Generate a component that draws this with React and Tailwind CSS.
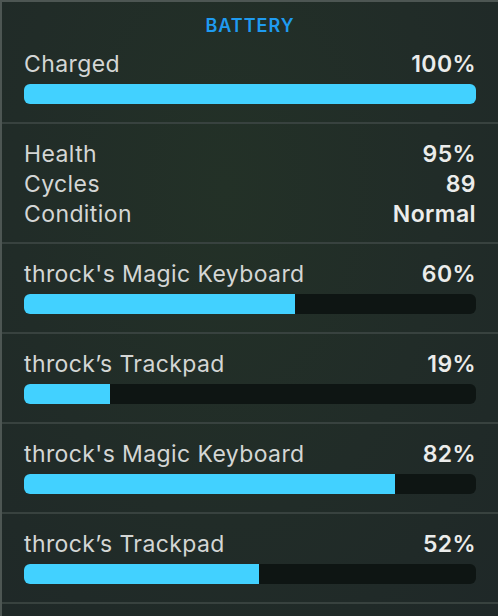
import React from 'react';

const devices = [
  { name: "throck's Magic Keyboard", level: 60 },
  { name: 'throck’s Trackpad', level: 19 },
  { name: "throck's Magic Keyboard", level: 82 },
  { name: 'throck’s Trackpad', level: 52 },
];

const stats = [
  ['Health', '95%'],
  ['Cycles', '89'],
  ['Condition', 'Normal'],
];

const Bar = ({ level }) => (
  <div className="h-5 w-full rounded-[6px] bg-[#0e1513] overflow-hidden">
    <div className="h-full bg-[#42d1ff]" style={{ width: `${level}%` }} />
  </div>
);

const Row = ({ label, value }) => (
  <div className="flex items-center justify-between h-[30px] text-[23px] leading-[30px] tracking-[0.4px]">
    <span className="text-[#d4d6d5]">{label}</span>
    <span className="font-semibold text-[#ebeceb]">{value}</span>
  </div>
);

const App = () => {
  return (
    <div
      className="w-[498px] h-[616px] overflow-hidden border-t-2 border-l-2 border-[#4d5653] bg-[#212b28] bg-[radial-gradient(ellipse_at_45%_30%,#233127_0%,#212c28_55%,#1f2828_100%)]"
      style={{ fontFamily: 'Inter, "Noto Sans", sans-serif' }}
    >
      <div className="px-[22px] pt-[14px] pb-[18px]">
        <div className="h-5 leading-5 text-center text-[18px] font-semibold tracking-[1px] text-[#1f9bf0]">BATTERY</div>
        <div className="mt-[13px]">
          <Row label="Charged" value="100%" />
        </div>
        <div className="mt-[5px]">
          <Bar level={100} />
        </div>
      </div>

      <div className="border-t-2 border-[#38423f] px-[22px] pt-[15px] pb-[13px]">
        {stats.map(([label, value]) => (
          <Row key={label} label={label} value={value} />
        ))}
      </div>

      {devices.map((d, i) => (
        <div key={i} className="border-t-2 border-[#38423f] px-[22px] pt-[15px] pb-[18px]">
          <Row label={d.name} value={`${d.level}%`} />
          <div className="mt-[5px]">
            <Bar level={d.level} />
          </div>
        </div>
      ))}
      <div className="border-t-2 border-[#38423f]" />
    </div>
  );
};

export default App;
